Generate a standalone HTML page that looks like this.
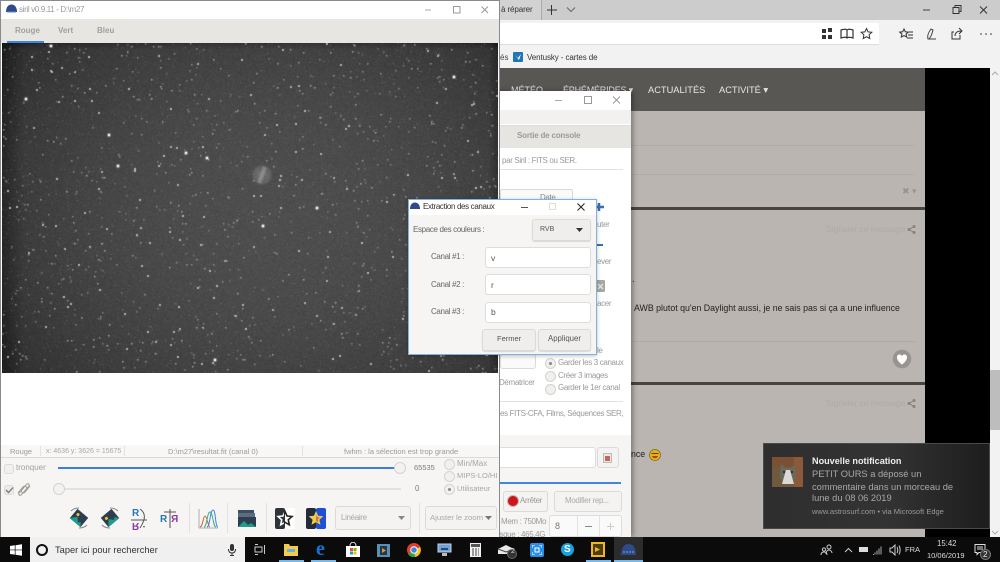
<!DOCTYPE html>
<html><head><meta charset="utf-8"><title>siril</title>
<style>
html,body{margin:0;padding:0;background:#000}
#r{position:relative;width:1000px;height:562px;overflow:hidden;font-family:"Liberation Sans",sans-serif;filter:blur(.3px);background:#bab5b1}
#r div,#r span.t,#r svg,#r canvas{position:absolute}
.t{position:absolute;white-space:nowrap;line-height:12px;font-size:8px;color:#9a9a9a}
.g{font-size:8px;letter-spacing:-.35px}
.btn{box-sizing:border-box;border:1px solid #dcdad7;border-radius:3px;background:#f4f3f1}
.rad{box-sizing:border-box;width:11px;height:11px;border:1px solid #d5d3d0;border-radius:50%;background:#f1f0ee}
.dot:after{content:"";position:absolute;left:3px;top:3px;width:3px;height:3px;background:#888;border-radius:50%}
.inp{box-sizing:border-box;background:#fff;border:1px solid #dfdddb;border-radius:3px}
</style></head><body>
<div id="r">

<!-- Browser chrome -->
<div style="left:0;top:0;width:1000px;height:20px;background:#cccccc"></div>
<div style="left:500px;top:0;width:41px;height:20px;background:#d2d2d2;border-right:1px solid #aaa"></div>
<span class="t" style="left:501px;top:4px;font-size:8px;letter-spacing:-.1px;color:#333">à réparer</span>
<svg style="left:546px;top:4px" width="34" height="12"><path d="M5.500 1v10M1 6h10" stroke="#333" fill="none"/><path d="M21 3.500l4 4 4-4" stroke="#666" fill="none"/></svg>
<svg style="left:920px;top:4px" width="75" height="12"><path d="M3 6h7" stroke="#444" fill="none"/><path d="M33 3.500h6v6h-6zM35 3.500v-2h6v6h-2" stroke="#333" fill="none"/><path d="M60 2.500l7 7M67 2.500l-7 7" stroke="#333" fill="none"/></svg>
<div style="left:0;top:20px;width:1000px;height:48px;background:#f2f2f2"></div>
<div style="left:490px;top:23px;width:389px;height:21px;background:#fff;border-bottom:1px solid #ddd"></div>
<svg style="left:820px;top:27px" width="180" height="14">
<path d="M2 2h4v4H2zM8 1h4v4H8zM2 8h4v4H2zM8 8h4v4H8z" fill="#333"/>
<path d="M21 3c3-1 5-1 6 0 1-1 3-1 6 0v8c-3-1-5-1-6 0-1-1-3-1-6 0zM27 3v8" stroke="#333" fill="none" stroke-width="1.200"/>
<path d="M46.500 1.500l1.600 3.400 3.700.4-2.700 2.500.7 3.700-3.300-1.800-3.300 1.800.7-3.700-2.700-2.500 3.700-.4z" stroke="#333" fill="none"/>
<path d="M84 2l1.300 2.800 3 .3-2.200 2 .6 3-2.700-1.500-2.700 1.500.6-3-2.200-2 3-.3zM89 5h4M88 8h5M87 11h6" stroke="#333" fill="none"/>
<path d="M108 12c-1-3 0-6 3-10l2 1c-1 4-2 7-4 9zM109 12h7" stroke="#444" fill="none"/>
<path d="M134 5h-2v7h8V8M135 9c0-3 2-5 6-5M139 1l3 3-3 3" stroke="#333" fill="none"/>
<circle cx="161" cy="7" r=".8" fill="#333"/><circle cx="166" cy="7" r=".8" fill="#333"/><circle cx="171" cy="7" r=".8" fill="#333"/>
</svg>
<span class="t" style="left:500px;top:52px;font-size:8px;color:#444">és</span>
<div style="left:513px;top:52px;width:10px;height:10px;background:#1f77b8;border-radius:1px"></div>
<svg style="left:513px;top:52px" width="10" height="10"><path d="M2 3l3 3 3-4-2 6z" fill="#fff"/></svg>
<span class="t" style="left:527px;top:52px;font-size:8px;letter-spacing:-.1px;color:#333;width:71px;overflow:hidden">Ventusky - cartes de prévisions</span>

<!-- Page -->
<div style="left:500px;top:68px;width:425px;height:43px;background:#595754"></div>
<span class="t" style="left:511px;top:84px;font-size:9px;color:#e4e3e2">MÉTÉO</span>
<span class="t" style="left:563px;top:84px;font-size:9px;letter-spacing:-.2px;color:#e4e3e2">ÉPHÉMÉRIDES ▾</span>
<span class="t" style="left:648px;top:84px;font-size:9.300px;color:#e8e7e6">ACTUALITÉS</span>
<span class="t" style="left:719px;top:84px;font-size:9.300px;color:#e8e7e6">ACTIVITÉ ▾</span>
<div style="left:500px;top:111px;width:425px;height:426px;background:#bab5b1"></div>
<div style="left:500px;top:145px;width:415px;height:1px;background:#b0aba7"></div>
<div style="left:500px;top:174px;width:415px;height:1px;background:#b0aba7"></div>
<span class="t" style="left:902px;top:185px;font-size:9px;color:#989490">✖ ▾</span>
<div style="left:500px;top:207px;width:425px;height:3px;background:#474542"></div>
<span class="t" style="left:826px;top:223px;font-size:8.500px;color:#aeaaa6">Signaler ce message</span>
<svg style="left:907px;top:225px" width="9" height="9"><path d="M7 1.500L2 4.500l5 3" stroke="#85817e" fill="none"/><circle cx="7" cy="1.500" r="1.500" fill="#85817e"/><circle cx="2" cy="4.500" r="1.500" fill="#85817e"/><circle cx="7" cy="7.500" r="1.500" fill="#85817e"/></svg>
<span class="t" style="left:632px;top:274px;font-size:10px;color:#333">.</span>
<span class="t" style="left:634px;top:302px;font-size:8.800px;color:#222">AWB plutot qu'en Daylight aussi, je ne sais pas si ça a une influence</span>
<div style="left:632px;top:341px;width:283px;height:1px;background:#aeaaa6"></div>
<svg style="left:892px;top:349px" width="20" height="20"><circle cx="10" cy="10" r="9.300" fill="#989591"/><path d="M10 15.500C3 10.500 4.500 5.500 7.500 5.500c1.300 0 2 .8 2.500 1.700.5-.9 1.200-1.700 2.500-1.700 3 0 4.500 5-2.500 10z" fill="#fff"/></svg>
<div style="left:500px;top:382px;width:425px;height:3px;background:#474542"></div>
<span class="t" style="left:826px;top:397px;font-size:8.500px;color:#aeaaa6">Signaler ce message</span>
<svg style="left:907px;top:399px" width="9" height="9"><path d="M7 1.500L2 4.500l5 3" stroke="#85817e" fill="none"/><circle cx="7" cy="1.500" r="1.500" fill="#85817e"/><circle cx="2" cy="4.500" r="1.500" fill="#85817e"/><circle cx="7" cy="7.500" r="1.500" fill="#85817e"/></svg>
<span class="t" style="left:631px;top:448px;font-size:8.800px;color:#222">nce</span>
<svg style="left:649px;top:449px" width="12" height="12"><circle cx="6" cy="6" r="5.500" fill="#e3b51d" stroke="#7d6510" stroke-width=".7"/><path d="M2.500 4.500h7" stroke="#5a4a10" stroke-width="1.200"/><path d="M2.800 7c1.500 3 5 3 6.400 0z" fill="#c0392b"/></svg>
<div style="left:925px;top:68px;width:65px;height:469px;background:#000"></div>
<div style="left:990px;top:68px;width:10px;height:469px;background:#f2f2f2"></div>
<div style="left:990px;top:370px;width:10px;height:60px;background:#bdbdbd"></div>
<svg style="left:991px;top:71px" width="8" height="6"><path d="M1 4l3-3 3 3" stroke="#aaa" fill="none"/></svg>
<svg style="left:991px;top:530px" width="8" height="6"><path d="M1 1l3 3 3-3" stroke="#aaa" fill="none"/></svg>

<!-- Second Siril window -->
<div style="left:480px;top:91px;width:151px;height:446px;background:#fff;box-shadow:2px 0 5px rgba(0,0,0,.35)"></div>
<svg style="left:550px;top:94px" width="80" height="12"><path d="M5 6.500h7" stroke="#aaa" fill="none"/><path d="M34.500 2.500h7v7h-7z" stroke="#999" fill="none"/><path d="M63 2.500l7 7M70 2.500l-7 7" stroke="#999" fill="none"/></svg>
<div style="left:480px;top:110px;width:151px;height:14px;background:#f2f1ef"></div>
<div style="left:480px;top:125px;width:151px;height:23px;background:#e7e5e2;border-top:1px solid #ddd;box-sizing:border-box"></div>
<span class="t" style="left:517px;top:130px;font-size:8px;letter-spacing:-.2px;font-weight:bold;color:#9b9b9b">Sortie de console</span>
<span class="t g" style="left:502px;top:155px">par Siril : FITS ou SER.</span>
<div style="left:500px;top:169px;width:123px;height:1px;background:#e4e3e1"></div>
<div class="btn" style="left:500px;top:189px;width:73px;height:16px;border-radius:2px;background:#fafafa"></div>
<span class="t g" style="left:540px;top:192px;color:#888">Date</span>
<svg style="left:596px;top:202px" width="9" height="10"><path d="M3 1v8M0 5h8" stroke="#3a6fb0" stroke-width="2.500" fill="none"/></svg>
<span class="t g" style="left:597px;top:219px">uter</span>
<div style="left:596px;top:244px;width:7px;height:2px;background:#3a6fb0"></div>
<span class="t g" style="left:597px;top:256px">ever</span>
<div style="left:596px;top:280px;width:9px;height:12px;background:#a9a79f;border-radius:1px"></div>
<svg style="left:597px;top:283px" width="7" height="7"><path d="M1 1l5 5M6 1L1 6" stroke="#e6e6e6" stroke-width="1.300"/></svg>
<span class="t g" style="left:597px;top:298px">acer</span>
<span class="t g" style="left:597px;top:345px">le</span>
<div class="btn" style="left:500px;top:354px;width:36px;height:15px;background:#fafafa"></div>
<div class="rad dot" style="left:545px;top:358px"></div>
<span class="t g" style="left:558px;top:357px">Garder les 3 canaux</span>
<div class="rad" style="left:545px;top:371px"></div>
<span class="t g" style="left:558px;top:370px">Créer 3 images</span>
<div class="rad" style="left:545px;top:384px"></div>
<span class="t g" style="left:558px;top:382px">Garder le 1er canal</span>
<span class="t g" style="left:499px;top:377px">Dématricer</span>
<div style="left:500px;top:401px;width:123px;height:1px;background:#e4e3e1"></div>
<span class="t g" style="left:500px;top:408px;color:#999">es FITS-CFA, Films, Séquences SER,</span>
<div style="left:480px;top:435px;width:151px;height:102px;background:#f6f5f4"></div>
<div class="inp" style="left:490px;top:447px;width:106px;height:21px"></div>
<div class="btn" style="left:597px;top:447px;width:22px;height:21px"></div>
<div style="left:603px;top:453px;width:9px;height:10px;background:#e8e8e8;border:1px solid #bbb;box-sizing:border-box"></div>
<div style="left:605px;top:456px;width:5px;height:5px;background:#c0392b;opacity:.75"></div>
<div style="left:490px;top:482px;width:131px;height:2px;background:#3f86e0"></div>
<div class="btn" style="left:503px;top:491px;width:45px;height:21px"></div>
<div style="left:508px;top:496px;width:10px;height:10px;border-radius:50%;background:#d1141a;box-shadow:0 0 0 1px #bbb"></div>
<span class="t g" style="left:520px;top:495px">Arrêter</span>
<div class="btn" style="left:554px;top:491px;width:68px;height:21px"></div>
<span class="t g" style="left:565px;top:495px;color:#aaa">Modifier rep...</span>
<span class="t g" style="left:501px;top:516px">Mem : 750Mo</span>
<span class="t g" style="left:498px;top:529px">isque : 465.4G</span>
<div class="inp" style="left:549px;top:515px;width:73px;height:22px;background:#fafafa"></div>
<span class="t" style="left:555px;top:520px;font-size:9px;color:#777">8</span>
<div style="left:577px;top:516px;width:1px;height:21px;background:#e3e2e0"></div>
<div style="left:599px;top:516px;width:1px;height:21px;background:#e3e2e0"></div>
<div style="left:585px;top:526px;width:7px;height:1px;background:#888"></div>
<svg style="left:606px;top:522px" width="9" height="9"><path d="M4.500 1v7M1 4.500h7" stroke="#ccc" fill="none"/></svg>

<!-- Main Siril window -->
<div style="left:0;top:0;width:500px;height:537px;background:#fff;border:1px solid #8a8a8a;border-bottom:0;box-sizing:border-box"></div>
<svg style="left:6px;top:4px" width="11" height="9"><path d="M0 8c0-5 2.500-7.500 5.500-7.500S11 3 11 8z" fill="#2e4a8a"/><path d="M1 8h9" stroke="#6a86c0"/></svg>
<span class="t g" style="left:19px;top:4px;color:#9a9a9a">siril v0.9.11 - D:\m27</span>
<svg style="left:420px;top:3px" width="76" height="13"><path d="M5 7h6" stroke="#aaa" fill="none"/><path d="M33.500 3.500h6.500v6.500h-6.500z" stroke="#999" fill="none"/><path d="M61.500 3.500l6.500 6.500M68 3.500l-6.500 6.500" stroke="#999" fill="none"/></svg>
<div style="left:1px;top:19px;width:498px;height:24px;background:#e8e6e3"></div>
<div style="left:7px;top:41px;width:37px;height:2px;background:#3f86e0"></div>
<span class="t" style="left:15px;top:25px;font-size:8px;font-weight:bold;color:#a0a0a0">Rouge</span>
<span class="t" style="left:58px;top:25px;font-size:8px;font-weight:bold;color:#a0a0a0">Vert</span>
<span class="t" style="left:97px;top:25px;font-size:8px;font-weight:bold;color:#a0a0a0">Bleu</span>
<canvas id="c" width="496" height="330" style="left:2px;top:43px;filter:blur(.35px);background:radial-gradient(ellipse at 55% 50%,#555,#444 60%,#2a2a2a 100%)"></canvas>

<div style="left:1px;top:445px;width:498px;height:12px;background:#f8f7f6"></div>
<span class="t" style="left:10px;top:446px;font-size:7.500px">Rouge</span>
<div style="left:40px;top:446px;width:1px;height:10px;background:#e3e2e0"></div>
<span class="t" style="left:46px;top:446px;font-size:7px;color:#a8a8a8">x: 4636 y: 3626 = 15675</span>
<div style="left:124px;top:446px;width:1px;height:10px;background:#e3e2e0"></div>
<span class="t" style="left:168px;top:446px;font-size:7.500px">D:\m27\resultat.fit (canal 0)</span>
<div style="left:302px;top:446px;width:1px;height:10px;background:#e3e2e0"></div>
<span class="t" style="left:344px;top:446px;font-size:7.500px">fwhm : la sélection est trop grande</span>
<div style="left:1px;top:457px;width:498px;height:80px;background:#f6f5f4;border-top:1px solid #dcdad7;box-sizing:border-box"></div>

<div class="btn" style="left:4px;top:464px;width:10px;height:10px;background:#f1f0ee"></div>
<span class="t" style="left:16px;top:462px;font-size:8px;color:#a0a0a0">tronquer</span>
<div style="left:58px;top:467px;width:343px;height:2px;background:#3f7ed8"></div>
<div style="left:394px;top:462px;width:12px;height:12px;border-radius:50%;background:#f3f2f0;border:1px solid #d5d3d0;box-sizing:border-box"></div>
<span class="t" style="left:414px;top:462px;font-size:7.500px;color:#7d7d7d">65535</span>
<div class="rad" style="left:444px;top:459px"></div>
<span class="t" style="left:457px;top:458px;font-size:8px;color:#a6a6a6">Min/Max</span>
<div class="rad" style="left:444px;top:471px"></div>
<span class="t" style="left:457px;top:470px;font-size:7.500px;color:#a6a6a6">MIPS-LO/HI</span>
<div class="rad dot" style="left:444px;top:484px"></div>
<span class="t" style="left:457px;top:483px;font-size:7.500px;color:#a6a6a6">Utilisateur</span>

<div class="btn" style="left:4px;top:485px;width:10px;height:10px;background:#ecebe9"></div>
<svg style="left:5px;top:486px" width="9" height="8"><path d="M1 4l2.500 2.500L8 1.500" stroke="#777" stroke-width="1.300" fill="none"/></svg>
<svg style="left:16px;top:481px" width="16" height="17"><path d="M2 12l5-6c2-2.500 5 .5 3 2.500l-5 5.500c-1 1-3-.5-2-2l5-5.500M14 5l-5 6c-2 2.500-5-.5-3-2.500l5-5.500c1-1 3 .5 2 2l-3.500 4" stroke="#a19e93" fill="none"/></svg>
<div style="left:58px;top:488px;width:343px;height:2px;background:#e3e2e0"></div>
<div style="left:53px;top:483px;width:12px;height:12px;border-radius:50%;background:#f3f2f0;border:1px solid #d5d3d0;box-sizing:border-box"></div>
<span class="t" style="left:415px;top:483px;font-size:8px;color:#7d7d7d">0</span>

<!-- toolbar icons -->
<svg style="left:68px;top:506px" width="22" height="24"><g transform="rotate(40 11 12)"><rect x="4" y="6" width="14" height="12" fill="#2c3e50"/><path d="M4 18l5-6 4 4 2-2 3 4z" fill="#1f9d8a"/><circle cx="8" cy="10" r="1.500" fill="#f2c531"/></g><path d="M3 5c3-3 6-3 8-3M19 19c-3 3-6 3-8 3" stroke="#888" fill="none"/></svg>
<svg style="left:99px;top:506px" width="22" height="24"><g transform="rotate(-40 11 12)"><rect x="4" y="6" width="14" height="12" fill="#2c3e50"/><path d="M4 18l5-6 4 4 2-2 3 4z" fill="#1f9d8a"/><circle cx="8" cy="10" r="1.500" fill="#f2c531"/></g><path d="M19 5c-3-3-6-3-8-3M3 19c3 3 6 3 8 3" stroke="#888" fill="none"/></svg>
<span class="t" style="left:132px;top:508px;font-size:10px;font-weight:bold;color:#2478b8">R</span>
<span class="t" style="left:132px;top:519px;font-size:10px;font-weight:bold;color:#8e3a9e;display:inline-block;transform:scaleY(-1)">R</span>
<svg style="left:130px;top:508px" width="20" height="22"><path d="M1 12h16M10 1c4 3 5 6 4 11-1 3-2 5-4 8" stroke="#555" fill="none"/><path d="M13 18l1 2 1-2z" fill="#555"/></svg>
<span class="t" style="left:160px;top:514px;font-size:10px;font-weight:bold;color:#2478b8">R</span>
<span class="t" style="left:171px;top:514px;font-size:10px;font-weight:bold;color:#8e3a9e;display:inline-block;transform:scaleX(-1)">R</span>
<svg style="left:160px;top:508px" width="20" height="21"><path d="M10 1v19M4 4h12" stroke="#555" fill="none"/></svg>
<div style="left:189px;top:503px;width:1px;height:30px;background:#e3e2e0"></div>
<svg style="left:198px;top:508px" width="21" height="21"><path d="M1 1v19h19" stroke="#b0b0b0" fill="none"/><path d="M2 19c3 0 3-11 5-11s3 11 5 11" stroke="#e2583e" fill="none"/><path d="M6 19c3 0 3-15 6-15s3 15 6 15" stroke="#3db07a" fill="none"/><path d="M9 19c3 0 3-17 6-17s2 17 5 17" stroke="#3f86e0" fill="none"/></svg>
<div style="left:227px;top:503px;width:1px;height:30px;background:#e3e2e0"></div>
<svg style="left:237px;top:509px" width="20" height="20"><rect x="1" y="1" width="16" height="3" fill="#3a5066"/><rect x="1" y="4" width="17" height="4" fill="#5a6e80"/><rect x="1" y="8" width="18" height="10" fill="#2c3e50"/><path d="M1 18l6-6 4 4 3-2 5 4z" fill="#1f9d8a"/></svg>
<div style="left:266px;top:503px;width:1px;height:30px;background:#e3e2e0"></div>
<svg style="left:275px;top:508px" width="20" height="21"><rect x="0" y="0" width="10" height="21" rx="2" fill="#2f3338"/><rect x="10" y="0" width="10" height="21" rx="2" fill="#fff"/><path d="M10 3.500l2 4.500 5 .5-3.700 3.300 1 5-4.300-2.500-4.300 2.500 1-5L3 8.500 8 8z" fill="none" stroke="#222" stroke-width="1.600"/><path d="M10 3.500l2 4.500 5 .5-3.700 3.300 1 5-4.300-2.500-4.300 2.500 1-5L3 8.500 8 8z" fill="none" stroke="#fff" stroke-width="1.600" clip-path="inset(0 10px 0 0)"/></svg>
<svg style="left:306px;top:508px" width="20" height="21"><rect x="0" y="0" width="10" height="21" rx="2" fill="#252a3a"/><rect x="10" y="0" width="10" height="21" rx="2" fill="#1f4fd8"/><path d="M10 3l2.100 4.800 5.200.5-3.900 3.400 1.100 5.100L10 14.200l-4.500 2.600 1.100-5.100L2.700 8.300l5.200-.5z" fill="#e9d04a"/><path d="M10 6l1 3 3 .4-2.200 2 .6 3L10 13z" fill="#e0684c"/></svg>
<div class="btn" style="left:335px;top:506px;width:76px;height:24px"></div>
<span class="t g" style="left:341px;top:512px;color:#a8a8a8">Linéaire</span>
<svg style="left:398px;top:516px" width="8" height="5"><path d="M0 0h7L3.500 4z" fill="#888"/></svg>
<div style="left:419px;top:503px;width:1px;height:30px;background:#e3e2e0"></div>
<div class="btn" style="left:425px;top:506px;width:72px;height:24px"></div>
<span class="t" style="left:430px;top:512px;font-size:7.700px;color:#a8a8a8">Ajuster le zoom</span>
<svg style="left:485px;top:516px" width="8" height="5"><path d="M0 0h7L3.500 4z" fill="#777"/></svg>

<!-- Dialog -->
<div style="left:408px;top:199px;width:189px;height:156px;box-sizing:border-box;background:#f6f5f4;border:1px solid #7fb2e0;box-shadow:0 1px 4px rgba(0,0,0,.25)"></div>
<div style="left:409px;top:200px;width:187px;height:15px;background:#fff"></div>
<svg style="left:410px;top:202px" width="10" height="8"><path d="M0 7c0-4 2-6.500 5-6.500S10 3 10 7z" fill="#2e4a8a"/></svg>
<span class="t g" style="left:423px;top:201px;color:#333">Extraction des canaux</span>
<svg style="left:518px;top:201px" width="72" height="12"><path d="M3 6.500h7" stroke="#555" fill="none"/><path d="M31.500 2.500h6v6h-6z" stroke="#ddd" fill="none"/><path d="M59.500 2.500l7 7M66.500 2.500l-7 7" stroke="#222" fill="none"/></svg>
<span class="t g" style="left:413px;top:224px;color:#666">Espace des couleurs :</span>
<div class="btn" style="left:532px;top:219px;width:59px;height:22px;background:#efeeec;box-shadow:0 1px 1px rgba(0,0,0,.12)"></div>
<span class="t" style="left:540px;top:224px;font-size:7px;color:#555">RVB</span>
<svg style="left:576px;top:228px" width="7" height="4"><path d="M0 0h7L3.500 4z" fill="#333"/></svg>
<span class="t g" style="left:431px;top:251px;color:#666">Canal #1 :</span>
<div class="inp" style="left:485px;top:247px;width:106px;height:21px"></div>
<span class="t" style="left:491px;top:252px;font-size:8.500px;color:#555">v</span>
<span class="t g" style="left:431px;top:279px;color:#666">Canal #2 :</span>
<div class="inp" style="left:485px;top:274px;width:106px;height:21px"></div>
<span class="t" style="left:491px;top:279px;font-size:8.500px;color:#555">r</span>
<span class="t g" style="left:431px;top:306px;color:#666">Canal #3 :</span>
<div class="inp" style="left:485px;top:302px;width:106px;height:21px"></div>
<span class="t" style="left:491px;top:306px;font-size:8.500px;color:#555">b</span>
<div class="btn" style="left:482px;top:329px;width:54px;height:22px;background:#efeeec;box-shadow:0 1px 1px rgba(0,0,0,.12)"></div>
<span class="t" style="left:497px;top:333px;font-size:7.500px;color:#555">Fermer</span>
<div class="btn" style="left:538px;top:329px;width:53px;height:22px;background:#efeeec;box-shadow:0 1px 1px rgba(0,0,0,.12)"></div>
<span class="t" style="left:548px;top:333px;font-size:7.800px;color:#555">Appliquer</span>

<!-- Notification -->
<div style="left:763px;top:443px;width:227px;height:86px;box-sizing:border-box;border:1px solid #4a4a4a;background:linear-gradient(90deg,#2e2e2e,#333 55%,#1d1d1d)"></div>
<svg style="left:772px;top:457px" width="31" height="30"><rect width="31" height="30" fill="#6f5a3e"/><rect width="31" height="10" fill="#7b5034"/><rect x="22" y="0" width="9" height="30" fill="#8a5a3a"/><path d="M9 7l5 4h5l4-4 1 13-5 7h-7l-4-7z" fill="#6a6a5a"/><path d="M14 13h4l4 14H10z" fill="#dcdad6"/><circle cx="12" cy="15" r="1" fill="#222"/><circle cx="20" cy="15" r="1" fill="#222"/></svg>
<span class="t" style="left:812px;top:455px;font-size:9.100px;font-weight:bold;color:#eee">Nouvelle notification</span>
<span class="t" style="left:812px;top:468px;font-size:9.300px;color:#a8a8a8">PETIT OURS a déposé un</span>
<span class="t" style="left:812px;top:481px;font-size:9.300px;color:#a8a8a8">commentaire dans un morceau de</span>
<span class="t" style="left:812px;top:492px;font-size:9.300px;color:#a8a8a8">lune du 08 06 2019</span>
<span class="t" style="left:812px;top:506px;font-size:7.500px;color:#999">www.astrosurf.com • via Microsoft Edge</span>

<!-- Taskbar -->
<div style="left:0;top:537px;width:1000px;height:25px;background:#0b0b0b"></div>
<svg style="left:10px;top:544px" width="12" height="12"><path d="M0 2l4.800-.7v4.300H0zM5.500 1.200L12 .2v5.400H5.500zM0 6.300h4.800v4.300L0 10zM5.500 6.300H12v5.500l-6.500-1z" fill="#fff"/></svg>
<div style="left:30px;top:537px;width:215px;height:25px;background:#f0f0f0"></div>
<div style="left:36px;top:544px;width:12px;height:12px;box-sizing:border-box;border:2px solid #111;border-radius:50%"></div>
<span class="t" style="left:55px;top:544px;font-size:9.300px;color:#333">Taper ici pour rechercher</span>
<svg style="left:228px;top:544px" width="8" height="12"><rect x="2" y="0" width="4" height="7" rx="2" fill="#333"/><path d="M.5 5c0 3 1.500 4 3.500 4s3.500-1 3.500-4M4 9v2M2 11.500h4" stroke="#333" fill="none"/></svg>
<svg style="left:254px;top:544px" width="12" height="11"><path d="M1 .5h3M1 10.500h3M1 3h7v5H1zM10.500 1v9" stroke="#ccc" fill="none"/></svg>
<svg style="left:284px;top:543px" width="14" height="13"><path d="M0 1h5l1 2h8v10H0z" fill="#f5c94c"/><rect x="3" y="6" width="8" height="3" fill="#5fb3e6"/></svg>
<div style="left:279px;top:560px;width:25px;height:2px;background:#76b9ed"></div>
<span class="t" style="left:316px;top:539px;font-size:20px;line-height:20px;font-weight:bold;color:#0f78d4;font-family:'Liberation Serif',serif">e</span>
<div style="left:311px;top:560px;width:25px;height:2px;background:#76b9ed"></div>
<svg style="left:346px;top:542px" width="14" height="15"><path d="M0 4h14v11H0z" fill="#fff"/><path d="M4 4c0-5 6-5 6 0" stroke="#ddd" fill="none"/><rect x="4" y="6" width="3" height="3" fill="#e74c2a"/><rect x="7.500" y="6" width="3" height="3" fill="#7ab800"/><rect x="4" y="9.500" width="3" height="3" fill="#00a4ef"/><rect x="7.500" y="9.500" width="3" height="3" fill="#ffb900"/></svg>
<svg style="left:377px;top:544px" width="13" height="13"><rect width="13" height="13" fill="#5b8fb0"/><path d="M3 2h7v9H3z" fill="#1a3a5a"/><path d="M5 4l4 2.500L5 9z" fill="#f28b20"/></svg>
<svg style="left:407px;top:543px" width="14" height="14"><circle cx="7" cy="7" r="7" fill="#e23d2e"/><path d="M7 7L1 11a7 7 0 0 0 7 3z" fill="#2ea24c"/><path d="M7 7l6-3a7 7 0 0 1-5 10z" fill="#f5c531"/><circle cx="7" cy="7" r="3.300" fill="#3f86e0" stroke="#fff"/></svg>
<svg style="left:437px;top:543px" width="15" height="14"><path d="M1 1h13v8H1z" fill="#6fa3d8" stroke="#ccd"/><path d="M4 5h7v2H4z" fill="#1e4a80"/><path d="M5 10h5v3H5z" fill="#bbb"/></svg>
<svg style="left:470px;top:543px" width="11" height="14"><rect width="11" height="14" fill="#f2f2f2"/><rect x="1" y="1" width="9" height="3" fill="#555"/><path d="M2 6h2M5 6h2M8 6h1M2 8h2M5 8h2M8 8h1M2 10h2M5 10h2M8 10h1M2 12h2M5 12h2M8 12h1" stroke="#444" fill="none"/></svg>
<svg style="left:498px;top:543px" width="22" height="16"><path d="M0 6l8-4 8 4v5H0z" fill="#e8e8e8"/><path d="M0 6l8 3 8-3" stroke="#444" fill="none"/><circle cx="14" cy="11" r="4.500" fill="#333" stroke="#666"/></svg>
<span class="t" style="left:511px;top:546px;font-size:7px;color:#ddd">2</span>
<div style="left:530px;top:543px;width:14px;height:14px;background:#2b8fe8;border-radius:2px"></div>
<svg style="left:532px;top:545px" width="10" height="10"><path d="M0 3V0h3M7 0h3v3M10 7v3H7M3 10H0V7" stroke="#fff" fill="none"/><rect x="3" y="3" width="4" height="4" stroke="#fff" fill="none"/></svg>
<div style="left:561px;top:543px;width:13px;height:13px;background:#18a0e0;border-radius:50%"></div>
<span class="t" style="left:564px;top:544px;font-size:10px;font-weight:bold;color:#fff">S</span>
<div style="left:591px;top:542px;width:14px;height:15px;box-sizing:border-box;background:#4a3d16;border:2px solid #f2b51a"></div>
<svg style="left:595px;top:547px" width="5" height="5"><path d="M0 0l5 2.500L0 5z" fill="#f2b51a"/></svg>
<div style="left:586px;top:560px;width:25px;height:2px;background:#76b9ed"></div>
<div style="left:614px;top:537px;width:29px;height:25px;background:#2c2c2c"></div>
<svg style="left:621px;top:543px" width="15" height="13"><path d="M0 12c0-7 3-11 7.500-11S15 5 15 12z" fill="#2e4a8a"/><path d="M2 9h11" stroke="#8aa0d0" stroke-dasharray="2 1"/></svg>
<div style="left:614px;top:560px;width:29px;height:2px;background:#76b9ed"></div>

<!-- Tray -->
<svg style="left:820px;top:544px" width="90" height="12"><g stroke="#ccc" fill="none"><circle cx="9" cy="3" r="2"/><path d="M6 10c0-2 1-4 3-4s3 2 3 3"/><circle cx="4" cy="5.500" r="1.600"/><path d="M1 11c0-2 1-3 3-3s3 1 3 3"/><path d="M25 8l3.500-3.500L32 8"/><path d="M70 4h2l3-3v10l-3-3h-2zM77 3c1 1.500 1 4.500 0 6M79 1.500c1.500 2.500 1.500 6.500 0 9"/></g><path d="M39 3h9v5h-9z" fill="#ddd"/><path d="M53 10.500h1M55 10.500v-2M57 10.500v-4M59 10.500v-6M61 10.500v-8" stroke="#aaa" fill="none"/></svg>
<span class="t" style="left:905px;top:544px;font-size:7.500px;color:#ddd">FRA</span>
<span class="t" style="left:937px;top:538px;font-size:7.800px;color:#ddd">15:42</span>
<span class="t" style="left:927px;top:550px;font-size:7.500px;color:#ddd">10/06/2019</span>
<svg style="left:974px;top:544px" width="14" height="12"><path d="M1 .5h10v8H5l-2 2v-2H1z" stroke="#ddd" fill="none"/><path d="M3 3h6M3 5h6" stroke="#ddd"/></svg>
<div style="left:980px;top:549px;width:11px;height:11px;border-radius:50%;background:#333;border:1px solid #777;box-sizing:border-box"></div>
<span class="t" style="left:983px;top:549px;font-size:8px;line-height:11px;color:#eee">2</span>
</div>
<script>
(function(){
var c=document.getElementById('c'),x=c.getContext('2d');
var W=496,H=330,s=12345;
function R(){s=(s*1664525+1013904223)>>>0;return s/4294967296;}
var d=x.createImageData(W,H),p=d.data;
for(var j=0;j<H;j++)for(var i=0;i<W;i++){
 var u=(i-W*0.55)/(W*0.62),v=(j-H*0.52)/(H*0.75);
 var r=u*u+v*v;
 var g=78-26*r;
 if(i<22)g-=(22-i)*0.8;
 if(i>W-10)g-=(i-W+10)*1.5;
 if(j<6)g-=(6-j)*2;
 if(g<24)g=24;
 g+=(R()-0.5)*12;
 var k=(i+j*W)*4;p[k]=p[k+1]=p[k+2]=g;p[k+3]=255;
}
x.putImageData(d,0,0);
/* nebula: round disc with a brighter diagonal band */
var nx=260,ny=132;
var gr=x.createRadialGradient(nx,ny,2,nx,ny,11);
gr.addColorStop(0,'rgba(150,150,150,.5)');gr.addColorStop(.7,'rgba(135,135,135,.4)');gr.addColorStop(1,'rgba(120,120,120,0)');
x.fillStyle=gr;x.beginPath();x.arc(nx,ny,11,0,7);x.fill();
x.strokeStyle='rgba(190,190,190,.35)';x.lineWidth=4;x.beginPath();x.moveTo(nx+3,ny-8);x.lineTo(nx-3,ny+8);x.stroke();
/* stars */
for(var n=0;n<3000;n++){
 var a=R()*W,b=R()*H,q=R(),l=Math.floor(88+115*q*q*q);
 x.fillStyle='rgba('+l+','+l+','+l+',.85)';
 var z=q>.95?2:(q>.65?1.5:1);
 x.fillRect(Math.floor(a),Math.floor(b),z,z);
}
[[184,110],[24,56],[49,3],[452,34],[213,317],[315,165],[261,183],[107,92],[116,123],[205,115]].forEach(function(t){
 x.fillStyle='rgba(255,255,255,.3)';x.beginPath();x.arc(t[0],t[1],2.2,0,7);x.fill();
 x.fillStyle='#fff';x.beginPath();x.arc(t[0],t[1],1.200,0,7);x.fill();
});
})();
</script>
</body></html>
